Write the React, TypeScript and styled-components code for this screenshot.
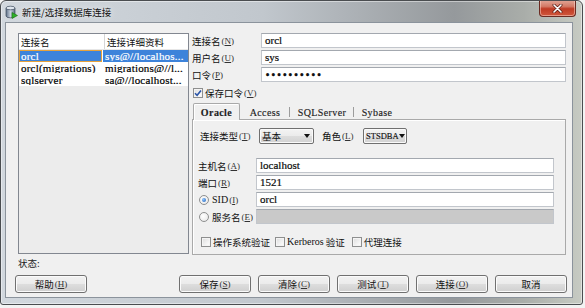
import React from 'react';
import styled, { createGlobalStyle } from 'styled-components';

const cjk = `"Noto Sans CJK SC", "Liberation Sans", sans-serif`;
const serif = `"Liberation Serif", "Noto Sans CJK SC", serif`;

const GlobalStyle = createGlobalStyle`
    html, body {
        margin: 0;
        padding: 0;
        background: #f3f3f3;
    }
    body {
        font-family: ${cjk};
        font-size: 9.5px;
        color: #111;
    }
`;

const Frame = styled.div`
    width: 583px;
    height: 305px;
    box-sizing: border-box;
    border: 1px solid #4a4d50;
    border-radius: 6px 6px 3px 3px;
    background: linear-gradient(to right, #d2d8de 0%, #c1c7cd 45%, #95999c 78%, #a9ada9 90%, #c7cbc3 100%);
    box-shadow: inset 0 0 0 1px rgba(255, 255, 255, 0.45);
    display: flex;
    flex-direction: column;
    overflow: hidden;
`;

const TitleBar = styled.div`
    height: 21px;
    display: flex;
    align-items: center;
    flex-shrink: 0;
`;

const TitleIcon = styled.svg`
    margin-left: 4px;
    width: 13px;
    height: 14px;
`;

const TitleText = styled.div`
    margin-left: 4px;
    font-size: 9.5px;
    color: #101010;
    text-shadow: 0 0 6px rgba(255, 255, 255, 0.9);
`;

const CloseButton = styled.div`
    align-self: flex-start;
    margin: -1px 6px 0 auto;
    width: 37px;
    height: 17px;
    box-sizing: border-box;
    border: 1px solid #6b2b22;
    border-top: none;
    border-radius: 0 0 4px 4px;
    background: linear-gradient(#e3a899 0%, #d37a66 40%, #bf3b24 55%, #d0573c 100%);
    box-shadow: inset 0 0 0 1px rgba(255, 220, 210, 0.5);
    display: flex;
    align-items: center;
    justify-content: center;
`;

const Client = styled.div`
    margin-left: 4px;
    width: 568px;
    height: 276px;
    box-sizing: border-box;
    border: 1px solid #8b939c;
    background: #f0f0f0;
    display: flex;
    flex-direction: column;
`;

const MainRow = styled.div`
    display: flex;
    padding: 10px 0 0 12px;
`;

const ListBox = styled.div`
    width: 171px;
    height: 221px;
    box-sizing: border-box;
    border: 1px solid #828790;
    background: #ececec;
    display: flex;
    flex-direction: column;
`;

const ListHeader = styled.div`
    display: flex;
    height: 16px;
    box-sizing: border-box;
    background: #fff;
    border-bottom: 1px solid #e6e6e6;
`;

const HeaderCell = styled.div<{ $w?: number }>`
    ${(p) => (p.$w ? `width: ${p.$w}px; border-right: 1px solid #d6d6d6;` : 'flex: 1;')}
    padding-left: 2px;
    display: flex;
    align-items: center;
    font-size: 9.5px;
    white-space: nowrap;
    overflow: hidden;
`;

const ListRow = styled.div`
    display: flex;
    height: 12px;
    gap: 1px;
    background: #fff;
`;

const Cell = styled.div<{ $w?: number; $sel?: boolean; $focus?: boolean }>`
    ${(p) => (p.$w ? `width: ${p.$w}px;` : 'flex: 1;')}
    box-sizing: border-box;
    padding-left: 1px;
    font-family: ${serif};
    font-size: 11px;
    line-height: 11px;
    letter-spacing: 0.2px;
    -webkit-text-stroke: 0.2px currentColor;
    white-space: nowrap;
    overflow: hidden;
    background: ${(p) => (p.$sel ? '#3d83da' : '#fff')};
    color: ${(p) => (p.$sel ? '#fff' : '#000')};
    border: 1px solid ${(p) => (p.$focus ? '#e6a23c' : 'transparent')};
`;

const RightCol = styled.div`
    margin-left: 3px;
    width: 374px;
    display: flex;
    flex-direction: column;
`;

const FieldRow = styled.div`
    display: flex;
    align-items: center;
    height: 15px;
    margin-bottom: 2px;
`;

const FieldLabel = styled.div<{ $w: number; $pl?: number }>`
    width: ${(p) => p.$w}px;
    padding-left: ${(p) => p.$pl || 0}px;
    box-sizing: border-box;
    display: flex;
    align-items: center;
    white-space: nowrap;
    font-size: 9.5px;
`;

const TextInput = styled.div<{ $w: number; $disabled?: boolean }>`
    width: ${(p) => p.$w}px;
    height: 15px;
    box-sizing: border-box;
    border: 1px solid #c2c6cc;
    border-top-color: #a3a8af;
    background: ${(p) => (p.$disabled ? '#c9c9c9' : '#fff')};
    padding-left: 3px;
    font-family: ${serif};
    font-size: 11px;
    line-height: 12px;
    -webkit-text-stroke: 0.2px #000;
    white-space: nowrap;
    overflow: hidden;
`;

const Dots = styled.span`
    font-family: "DejaVu Sans", sans-serif;
    font-size: 8px;
    letter-spacing: 0.6px;
    font-weight: bold;
`;

const Mn = styled.span`
    font-family: ${serif};
    font-size: 9px;
    margin-left: 1px;
    color: #333;
    u {
        text-underline-offset: 1px;
    }
`;

const CheckRow = styled.div<{ $pl?: number }>`
    display: flex;
    align-items: center;
    height: 14px;
    margin-top: 2px;
    padding-left: ${(p) => p.$pl || 0}px;
`;

const CheckItem = styled.div<{ $ml?: number }>`
    display: flex;
    align-items: center;
    margin-left: ${(p) => p.$ml || 0}px;
    white-space: nowrap;
    font-size: 9.5px;
`;

const Box = styled.div`
    width: 10px;
    height: 10px;
    box-sizing: border-box;
    border: 1px solid #8e8f8f;
    background: linear-gradient(135deg, #dcdcdc 0%, #f6f6f6 70%, #fff 100%);
    box-shadow: inset 0 0 0 1px #f4f4f4;
    margin-right: 2px;
    display: flex;
    align-items: center;
    justify-content: center;
    flex-shrink: 0;
`;

const Radio = styled.div<{ $on?: boolean }>`
    width: 10px;
    height: 10px;
    box-sizing: border-box;
    border-radius: 50%;
    border: 1px solid #8e8f8f;
    background: radial-gradient(circle at 40% 40%, #fff 0%, #e4e4e4 100%);
    margin-right: 3px;
    display: flex;
    align-items: center;
    justify-content: center;
    &::after {
        content: '';
        display: ${(p) => (p.$on ? 'block' : 'none')};
        width: 4px;
        height: 4px;
        border-radius: 50%;
        background: radial-gradient(circle at 35% 35%, #8cc3ff 0%, #1c5fb5 100%);
    }
`;

const Latin = styled.span<{ $size?: number }>`
    font-family: ${serif};
    font-size: ${(p) => p.$size || 10}px;
`;

const TabStrip = styled.div`
    display: flex;
    align-items: flex-end;
    height: 16px;
    margin-top: 3px;
    padding-left: 1px;
`;

const Tab = styled.div<{ $w: number; $sel?: boolean; $sep?: boolean }>`
    width: ${(p) => p.$w}px;
    height: ${(p) => (p.$sel ? 17 : 14)}px;
    box-sizing: border-box;
    display: flex;
    align-items: center;
    justify-content: center;
    font-family: ${serif};
    font-size: 10px;
    letter-spacing: 0.4px;
    font-weight: ${(p) => (p.$sel ? 'bold' : 'normal')};
    -webkit-text-stroke: 0.15px #222;
    color: #222;
    position: relative;
    ${(p) =>
        p.$sel
            ? `
        border: 1px solid #a9a9a9;
        border-bottom: none;
        border-radius: 2px 2px 0 0;
        background: #f0f0f0;
        box-shadow: inset 1px 1px 0 #fff;
        margin-bottom: -1px;
        z-index: 1;
    `
            : ''}
    ${(p) =>
        p.$sep
            ? `
        &::after {
            content: '';
            position: absolute;
            right: 0;
            top: 2px;
            width: 1px;
            height: 10px;
            background: #9c9c9c;
        }
    `
            : ''}
`;

const TabPanel = styled.div`
    width: 374px;
    height: 136px;
    box-sizing: border-box;
    border: 1px solid #a9a9a9;
    box-shadow: inset 1px 1px 0 #fff;
    padding-top: 8px;
    display: flex;
    flex-direction: column;
`;

const TypeRow = styled.div`
    display: flex;
    align-items: center;
    height: 16px;
    margin-bottom: 14px;
`;

const Combo = styled.div<{ $w: number }>`
    width: ${(p) => p.$w}px;
    height: 16px;
    box-sizing: border-box;
    border: 1px solid #707070;
    border-radius: 2px;
    background: linear-gradient(#f3f3f3 0%, #ebebeb 50%, #dddddd 51%, #d2d2d2 100%);
    box-shadow: inset 0 0 0 1px #fafafa;
    display: flex;
    align-items: center;
    padding: 0 3px 0 2px;
    white-space: nowrap;
    overflow: hidden;
`;

const ComboText = styled.span<{ $latin?: boolean }>`
    flex: 1;
    font-family: ${(p) => (p.$latin ? serif : cjk)};
    font-size: ${(p) => (p.$latin ? 8.5 : 9.5)}px;
    -webkit-text-stroke: ${(p) => (p.$latin ? '0.15px #111' : '0')};
`;

const Arrow = styled.span`
    width: 0;
    height: 0;
    flex-shrink: 0;
    border-left: 3.5px solid transparent;
    border-right: 3.5px solid transparent;
    border-top: 4px solid #111;
`;

const CheckLine = styled.div`
    display: flex;
    align-items: center;
    height: 11px;
    margin-top: 10px;
    padding-left: 8px;
`;

const Status = styled.div`
    height: 12px;
    margin-top: 2px;
    padding-left: 12px;
    display: flex;
    align-items: center;
    font-size: 9.5px;
    color: #222;
`;

const ButtonRow = styled.div`
    display: flex;
    margin-top: 6px;
    padding: 0 5px 0 9px;
`;

const ButtonGroup = styled.div`
    display: flex;
    gap: 7px;
    margin-left: auto;
`;

const Button = styled.div`
    width: 72px;
    height: 18px;
    box-sizing: border-box;
    border: 1px solid #707070;
    border-radius: 3px;
    background: linear-gradient(#f2f2f2 0%, #ebebeb 48%, #dddddd 52%, #cfcfcf 100%);
    box-shadow: inset 0 0 0 1px #fbfbfb;
    display: flex;
    align-items: center;
    justify-content: center;
    font-size: 9.5px;
    color: #111;
    white-space: nowrap;
`;

function Key({ k }: { k: string }) {
    return (
        <Mn>
            (<u>{k}</u>)
        </Mn>
    );
}

function CheckMark() {
    return (
        <svg width="8" height="8" viewBox="0 0 8 8">
            <path d="M1 4.2 L3.1 6.3 L7 1.4" fill="none" stroke="#2b55a8" strokeWidth="1.6" />
        </svg>
    );
}

const rows = [
    { name: 'orcl', detail: 'sys@//localhos...', sel: true },
    { name: 'orcl(migrations)', detail: 'migrations@//l...' },
    { name: 'sqlserver', detail: 'sa@//localhost...' },
];

export default function App() {
    return (
        <>
            <GlobalStyle />
            <Frame>
                <TitleBar>
                    <TitleIcon viewBox="0 0 13 14">
                        <defs>
                            <linearGradient id="cyl" x1="0" x2="1">
                                <stop offset="0" stopColor="#5d6f86" />
                                <stop offset="0.5" stopColor="#c9d3df" />
                                <stop offset="1" stopColor="#5a6b80" />
                            </linearGradient>
                        </defs>
                        <path d="M1 3 L1 11 A4.5 1.8 0 0 0 10 11 L10 3 Z" fill="url(#cyl)" stroke="#3d4b5c" strokeWidth="0.7" />
                        <ellipse cx="5.5" cy="3" rx="4.5" ry="1.8" fill="#dfe6ee" stroke="#3d4b5c" strokeWidth="0.7" />
                        <path d="M7 7.5 L12.5 10.5 L7 13.5 Z" fill="#2fb12a" stroke="#17700f" strokeWidth="0.6" />
                    </TitleIcon>
                    <TitleText>新建/选择数据库连接</TitleText>
                    <CloseButton>
                        <svg width="11" height="9" viewBox="0 0 11 9">
                            <path d="M2 1 L9 8 M9 1 L2 8" stroke="#5a1d14" strokeWidth="3" strokeLinecap="round" />
                            <path d="M2 1 L9 8 M9 1 L2 8" stroke="#fff" strokeWidth="1.6" strokeLinecap="round" />
                        </svg>
                    </CloseButton>
                </TitleBar>
                <Client>
                    <MainRow>
                        <ListBox>
                            <ListHeader>
                                <HeaderCell $w={83}>连接名</HeaderCell>
                                <HeaderCell>连接详细资料</HeaderCell>
                            </ListHeader>
                            {rows.map((r) => (
                                <ListRow key={r.name}>
                                    <Cell $w={83} $sel={r.sel} $focus={r.sel}>
                                        {r.name}
                                    </Cell>
                                    <Cell $sel={r.sel}>{r.detail}</Cell>
                                </ListRow>
                            ))}
                        </ListBox>
                        <RightCol>
                            <FieldRow>
                                <FieldLabel $w={69}>
                                    连接名<Key k="N" />
                                </FieldLabel>
                                <TextInput $w={305}>orcl</TextInput>
                            </FieldRow>
                            <FieldRow>
                                <FieldLabel $w={69}>
                                    用户名<Key k="U" />
                                </FieldLabel>
                                <TextInput $w={305}>sys</TextInput>
                            </FieldRow>
                            <FieldRow>
                                <FieldLabel $w={69}>
                                    口令<Key k="P" />
                                </FieldLabel>
                                <TextInput $w={305}>
                                    <Dots>••••••••••</Dots>
                                </TextInput>
                            </FieldRow>
                            <CheckRow $pl={1}>
                                <CheckItem>
                                    <Box>
                                        <CheckMark />
                                    </Box>
                                    保存口令
                                    <Key k="V" />
                                </CheckItem>
                            </CheckRow>
                            <TabStrip>
                                <Tab $w={47} $sel>
                                    Oracle
                                </Tab>
                                <Tab $w={50} $sep>
                                    Access
                                </Tab>
                                <Tab $w={64} $sep>
                                    SQLServer
                                </Tab>
                                <Tab $w={46}>Sybase</Tab>
                            </TabStrip>
                            <TabPanel>
                                <TypeRow>
                                    <FieldLabel $w={66} $pl={7}>
                                        连接类型<Key k="T" />
                                    </FieldLabel>
                                    <Combo $w={55}>
                                        <ComboText>基本</ComboText>
                                        <Arrow />
                                    </Combo>
                                    <FieldLabel $w={49} $pl={8}>
                                        角色<Key k="L" />
                                    </FieldLabel>
                                    <Combo $w={44}>
                                        <ComboText $latin>STSDBA</ComboText>
                                        <Arrow />
                                    </Combo>
                                </TypeRow>
                                <FieldRow>
                                    <FieldLabel $w={63} $pl={5}>
                                        主机名<Key k="A" />
                                    </FieldLabel>
                                    <TextInput $w={298}>localhost</TextInput>
                                </FieldRow>
                                <FieldRow>
                                    <FieldLabel $w={63} $pl={5}>
                                        端口<Key k="R" />
                                    </FieldLabel>
                                    <TextInput $w={298}>1521</TextInput>
                                </FieldRow>
                                <FieldRow>
                                    <FieldLabel $w={63} $pl={6}>
                                        <Radio $on />
                                        <Latin $size={10}>SID</Latin>
                                        <Key k="I" />
                                    </FieldLabel>
                                    <TextInput $w={298}>orcl</TextInput>
                                </FieldRow>
                                <FieldRow>
                                    <FieldLabel $w={63} $pl={6}>
                                        <Radio />
                                        服务名<Key k="E" />
                                    </FieldLabel>
                                    <TextInput $w={298} $disabled />
                                </FieldRow>
                                <CheckLine>
                                    <CheckItem>
                                        <Box />
                                        操作系统验证
                                    </CheckItem>
                                    <CheckItem $ml={5}>
                                        <Box />
                                        <Latin $size={10}>Kerberos</Latin>&nbsp;验证
                                    </CheckItem>
                                    <CheckItem $ml={7}>
                                        <Box />
                                        代理连接
                                    </CheckItem>
                                </CheckLine>
                            </TabPanel>
                        </RightCol>
                    </MainRow>
                    <Status>状态:</Status>
                    <ButtonRow>
                        <Button>
                            帮助<Key k="H" />
                        </Button>
                        <ButtonGroup>
                            <Button>
                                保存<Key k="S" />
                            </Button>
                            <Button>
                                清除<Key k="C" />
                            </Button>
                            <Button>
                                测试<Key k="T" />
                            </Button>
                            <Button>
                                连接<Key k="O" />
                            </Button>
                            <Button>取消</Button>
                        </ButtonGroup>
                    </ButtonRow>
                </Client>
            </Frame>
        </>
    );
}
